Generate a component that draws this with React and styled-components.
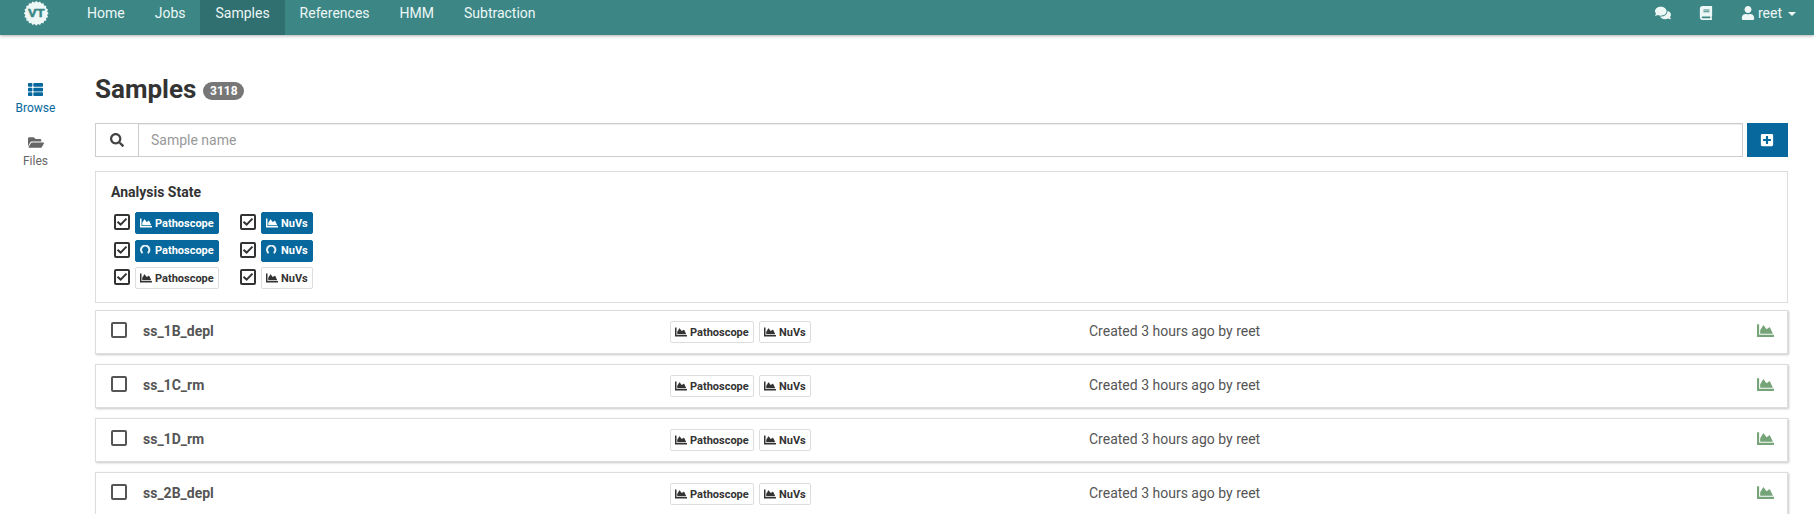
import React from "react";
import styled, { createGlobalStyle } from "styled-components";
import {
  FaBook, FaChartArea, FaComments, FaFolderOpen,
  FaPlusSquare, FaSearch, FaThList, FaUser,
} from "react-icons/fa";

const GlobalStyle = createGlobalStyle`
  *, *::before, *::after { box-sizing: border-box; }
  body {
    margin: 0;
    height: 514px;
    overflow: hidden;
    background: #fff;
    color: #333;
    font: 14px/20px Roboto, "Liberation Sans", sans-serif;
  }
  svg { flex: none; display: block; }
`;

const NavBar = styled.nav`
  display: flex;
  height: 35px;
  padding-left: 24px;
  padding-right: 18px;
  background: #3c8786;
  color: #edf7f6;
  box-shadow: 0 1px 3px rgba(0, 0, 0, 0.3);
`;

const Brand = styled.div`
  width: 48px;
  padding-top: 1px;
`;

const BrandText = styled.text`
  font: 700 11.5px Roboto, sans-serif;
  fill: #3c8786;
  stroke: #3c8786;
  stroke-width: 0.4px;
`;

const NavLink = styled.a`
  height: 35px;
  padding: 3px 15px 0;
  background: ${(p) => (p.$active ? "#317070" : "transparent")};
`;

const NavTools = styled.div`
  display: flex;
  align-items: center;
  height: 26px;
  margin-left: auto;
`;

const ToolLink = styled.a`
  margin-right: 28px;
`;

const UserMenu = styled.a`
  display: flex;
  align-items: center;
  span { margin: 0 6px 0 3px; }
`;

const Caret = styled.i`
  margin-top: 1px;
  border-top: 4px solid currentColor;
  border-left: 4px solid transparent;
  border-right: 4px solid transparent;
`;

const Layout = styled.div`
  display: flex;
`;

const SideBar = styled.aside`
  display: flex;
  flex-direction: column;
  flex: none;
  width: 95px;
  padding: 47px 24px 0 0;
`;

const SideLink = styled.a`
  display: flex;
  flex-direction: column;
  align-items: center;
  height: 53px;
  font-size: 12px;
  line-height: 17px;
  color: ${(p) => (p.$active ? "#07689d" : "#666")};
  svg { height: 15px; margin-bottom: 3px; overflow: visible; }
`;

const Main = styled.main`
  flex: 1;
  padding: 39px 26px 0 0;
`;

const Header = styled.header`
  display: flex;
  align-items: center;
  height: 30px;
  margin-bottom: 19px;
`;

const Title = styled.h1`
  margin: 0;
  font-size: 26px;
  line-height: 30px;
  font-weight: 700;
`;

const Count = styled.span`
  width: 41px;
  height: 18px;
  margin: 4px 0 0 7px;
  border-radius: 9px;
  background: #777;
  color: #fff;
  font-size: 12px;
  font-weight: 700;
  line-height: 18px;
  text-align: center;
`;

const Toolbar = styled.div`
  display: flex;
  height: 34px;
  margin-bottom: 14px;
`;

const SearchAddon = styled.span`
  display: flex;
  align-items: center;
  justify-content: center;
  width: 43px;
  border: 1px solid #ccc;
  border-right: 0;
  color: #444;
`;

const SearchInput = styled.input`
  flex: 1;
  padding: 6px 12px;
  border: 1px solid #ccc;
  border-radius: 0;
  box-shadow: inset 0 1px 1px rgba(0, 0, 0, 0.075);
  font: inherit;
  &::placeholder { color: #999; opacity: 1; }
`;

const CreateButton = styled.button`
  display: flex;
  align-items: center;
  justify-content: center;
  width: 41px;
  margin-left: 4px;
  padding: 0 1px 0 0;
  border: 0;
  background: #07689d;
  color: #fff;
`;

const FilterPanel = styled.section`
  height: 132px;
  margin-bottom: 7px;
  padding: 10px 15px;
  border: 1px solid #ddd;
`;

const FilterTitle = styled.h5`
  margin: 0 0 10px;
  font-size: 14px;
  line-height: 20px;
  font-weight: 700;
`;

const FilterGrid = styled.div`
  display: grid;
  grid-template-columns: 126px 80px;
  grid-auto-rows: 27.5px;
  padding-left: 3px;
`;

const FilterItem = styled.div`
  display: flex;
  align-items: flex-start;
  gap: 5px;
`;

const CheckFrame = styled.span`
  display: block;
  flex: none;
  width: 16px;
  height: 16px;
  margin-top: ${(p) => (p.$checked ? "2px" : "1px")};
  border: 2px solid ${(p) => (p.$checked ? "#333" : "#555")};
  border-radius: 2px;
`;

const Label = styled.span`
  display: inline-flex;
  align-items: center;
  height: 22px;
  width: ${(p) => p.$width};
  padding: 1px 0 0 4px;
  border: 1px solid ${(p) => (p.$filled ? "#07689d" : "#ddd")};
  border-radius: 2px;
  background: ${(p) => (p.$filled ? "#07689d" : "#fff")};
  color: ${(p) => (p.$filled ? "#fff" : "#333")};
  font-size: 11px;
  font-weight: 700;
  line-height: 20px;
  svg { margin: -1px 3px 0 0; }
`;

const SampleRow = styled.article`
  display: flex;
  height: 44px;
  margin-bottom: 10px;
  padding: 0 13px 0 15px;
  border: 1px solid #ddd;
  box-shadow: 1px 1px 2px rgba(0, 0, 0, 0.22);
  color: #555;
`;

const SampleName = styled.div`
  display: flex;
  align-items: flex-start;
  gap: 16px;
  width: 559px;
  padding-top: 10px;
  font-weight: 700;
`;

const SampleLabels = styled.div`
  display: flex;
  gap: 5px;
  width: 419px;
  padding-top: 10px;
`;

const Created = styled.div`
  flex: 1;
  padding-top: 10px;
`;

const QuickAnalyze = styled.a`
  padding-top: 11px;
  color: #75a478;
`;

const teeth = Array.from({ length: 40 }, (_, i) => {
  const angle = (i * Math.PI) / 20;
  const radius = i % 2 ? 11 : 12.4;
  return `${12.25 + radius * Math.cos(angle)},${12.25 + radius * Math.sin(angle)}`;
}).join(" ");

function Logo() {
  return (
    <svg width="24.5" height="24.5" viewBox="0 0 24.5 24.5">
      <polygon points={teeth} fill="#edf7f6" />
      <BrandText x="3.9" y="16.2" textLength="17" lengthAdjust="spacingAndGlyphs">VT</BrandText>
    </svg>
  );
}

function Checkbox({ checked }) {
  return (
    <CheckFrame $checked={checked}>
      {checked && (
        <svg width="12" height="12" viewBox="0 0 12 12" fill="none" stroke="#333" strokeWidth="2">
          <path d="M1.5 5.8 4.6 8.6 10.5 2.6" />
        </svg>
      )}
    </CheckFrame>
  );
}

function PendingIcon() {
  return (
    <svg width="12" height="12" viewBox="0 0 12 12" fill="none" stroke="currentColor" strokeWidth="2">
      <path d="M2.6 8.1A4.2 4.2 0 1 1 7.8 8.1" opacity=".9" />
    </svg>
  );
}

function AnalysisLabel({ name, filled, pending }) {
  return (
    <Label $filled={filled} $width={name === "NuVs" ? "52px" : "84px"}>
      {pending ? <PendingIcon /> : <FaChartArea size={12} />}
      {name}
    </Label>
  );
}

const filters = [
  { filled: true, pending: false },
  { filled: true, pending: true },
  { filled: false, pending: false },
];

const samples = ["ss_1B_depl", "ss_1C_rm", "ss_1D_rm", "ss_2B_depl"];

export default function App() {
  return (
    <>
      <GlobalStyle />
      <NavBar>
        <Brand><Logo /></Brand>
        <NavLink>Home</NavLink>
        <NavLink>Jobs</NavLink>
        <NavLink $active>Samples</NavLink>
        <NavLink>References</NavLink>
        <NavLink>HMM</NavLink>
        <NavLink>Subtraction</NavLink>
        <NavTools>
          <ToolLink><FaComments size={16} /></ToolLink>
          <ToolLink><FaBook size={14} /></ToolLink>
          <UserMenu>
            <FaUser size={14} />
            <span>reet</span>
            <Caret />
          </UserMenu>
        </NavTools>
      </NavBar>
      <Layout>
        <SideBar>
          <SideLink $active><FaThList size={15} />Browse</SideLink>
          <SideLink><FaFolderOpen size={16} />Files</SideLink>
        </SideBar>
        <Main>
          <Header>
            <Title>Samples</Title>
            <Count>3118</Count>
          </Header>
          <Toolbar>
            <SearchAddon><FaSearch size={14} /></SearchAddon>
            <SearchInput placeholder="Sample name" />
            <CreateButton aria-label="Create"><FaPlusSquare size={14} /></CreateButton>
          </Toolbar>
          <FilterPanel>
            <FilterTitle>Analysis State</FilterTitle>
            <FilterGrid>
              {filters.map((filter, i) =>
                ["Pathoscope", "NuVs"].map((name) => (
                  <FilterItem key={name + i}>
                    <Checkbox checked />
                    <AnalysisLabel name={name} {...filter} />
                  </FilterItem>
                ))
              )}
            </FilterGrid>
          </FilterPanel>
          {samples.map((name) => (
            <SampleRow key={name}>
              <SampleName><Checkbox />{name}</SampleName>
              <SampleLabels>
                <AnalysisLabel name="Pathoscope" />
                <AnalysisLabel name="NuVs" />
              </SampleLabels>
              <Created>Created 3 hours ago by reet</Created>
              <QuickAnalyze><FaChartArea size={17} /></QuickAnalyze>
            </SampleRow>
          ))}
        </Main>
      </Layout>
    </>
  );
}
